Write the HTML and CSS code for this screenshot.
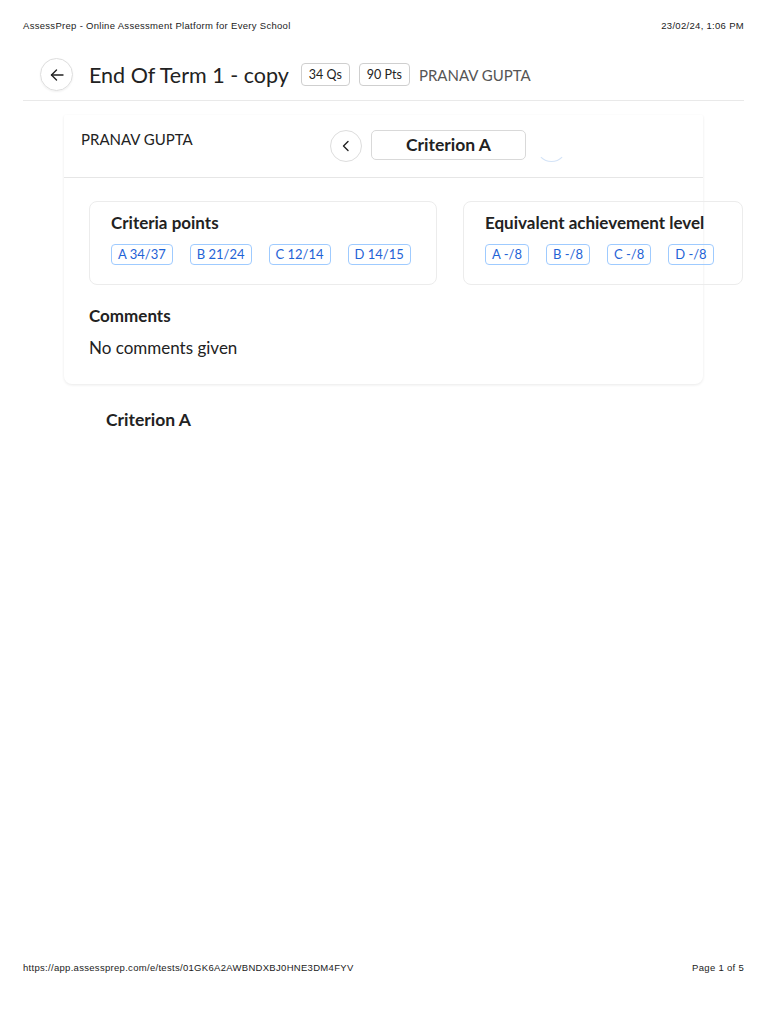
FILE: index.html
```html
<!DOCTYPE html>
<html lang="en">

<head>
    <meta charset="UTF-8">
    <meta name="viewport" content="width=device-width, initial-scale=1.0">
    <title>AssessPrep - Online Assessment Platform for Every School</title>
    <link rel="stylesheet" href="styles.css">
</head>

<body>
    <div class="sheet">
        <!-- print header -->
        <div class="print-bar">
            <span>AssessPrep - Online Assessment Platform for Every School</span>
            <span>23/02/24, 1:06 PM</span>
        </div>

        <!-- test title -->
        <div class="head">
            <a class="back" href="javascript:;">
                <svg width="16" height="16" viewBox="0 0 16 16" fill="none" stroke="#222" stroke-width="1.4"
                    stroke-linecap="round" stroke-linejoin="round">
                    <path d="M14 8H2.5"></path>
                    <path d="M7.5 3L2.5 8l5 5"></path>
                </svg>
            </a>
            <h1 class="title">End Of Term 1 - copy</h1>
            <span class="badge">34 Qs</span>
            <span class="badge">90 Pts</span>
            <span class="student">PRANAV GUPTA</span>
        </div>

        <div class="panel">
            <div class="panel-top">
                <div class="panel-name">PRANAV GUPTA</div>
                <a class="prev" href="javascript:;">
                    <svg width="12" height="12" viewBox="0 0 12 12" fill="none" stroke="#222" stroke-width="1.4"
                        stroke-linecap="round" stroke-linejoin="round">
                        <path d="M8 1.5L3.5 6 8 10.5"></path>
                    </svg>
                </a>
                <div class="crit-select">Criterion A</div>
                <i class="spin"></i>
            </div>

            <div class="cards">
                <div class="card card-points">
                    <h3>Criteria points</h3>
                    <ul class="tags">
                        <li>A 34/37</li>
                        <li>B 21/24</li>
                        <li>C 12/14</li>
                        <li>D 14/15</li>
                    </ul>
                </div>
                <div class="card card-level">
                    <h3>Equivalent achievement level</h3>
                    <ul class="tags tags-sm">
                        <li>A -/8</li>
                        <li>B -/8</li>
                        <li>C -/8</li>
                        <li>D -/8</li>
                    </ul>
                </div>
            </div>

            <div class="comments">
                <h3>Comments</h3>
                <p>No comments given</p>
            </div>
        </div>

        <h2 class="crit-title">Criterion A</h2>

        <!-- print footer -->
        <div class="print-bar print-foot">
            <span>https://app.assessprep.com/e/tests/01GK6A2AWBNDXBJ0HNE3DM4FYV</span>
            <span>Page 1 of 5</span>
        </div>
    </div>
</body>

</html>
```

FILE: styles.css
```css
html,
body,
h1,
h2,
h3,
p,
ul {
    margin: 0;
    padding: 0;
}

body {
    background: #fff;
    color: #222;
    font-family: Lato, "Open Sans", sans-serif;
}

.sheet {
    display: flex;
    flex-direction: column;
    min-height: 1024px;
}

.print-bar {
    display: flex;
    justify-content: space-between;
    padding: 20px 24px 0 23px;
    font-family: "Liberation Sans", Arial, sans-serif;
    font-size: 9.5px;
    letter-spacing: .3px;
    line-height: 11px;
    color: #222;
}

.print-foot {
    margin-top: auto;
    padding: 0 24px 51px 23px;
}

/* title row */
.head {
    display: flex;
    align-items: center;
    margin: 0 24px 0 23px;
    padding: 27px 0 9px 17px;
    border-bottom: 1px solid #e9e9e9;
}

.back {
    display: flex;
    align-items: center;
    justify-content: center;
    width: 31px;
    height: 31px;
    border: 1px solid #ddd;
    border-radius: 50%;
    box-shadow: 0 1px 2px rgba(0, 0, 0, .06);
}

.title {
    margin-left: 16px;
    font-size: 21.5px;
    font-weight: 400;
    line-height: 28px;
    color: #222;
}

.badge {
    margin-left: 12px;
    height: 21px;
    padding: 0 7px;
    border: 1px solid #cfcfcf;
    border-radius: 4px;
    font-size: 12.5px;
    line-height: 21px;
    color: #222;
}

.badge+.badge {
    margin-left: 9px;
}

.student {
    margin-left: 9px;
    font-size: 15px;
    color: #555;
}

/* main panel */
.panel {
    margin: 14px 65px 0 64px;
    padding-bottom: 25px;
    border-radius: 2px 2px 8px 8px;
    box-shadow: 0 1px 3px rgba(0, 0, 0, .09);
}

.panel-top {
    display: flex;
    align-items: flex-start;
    padding: 15px 0 15px 17px;
    border-bottom: 1px solid #e6e6e6;
}

.panel-name {
    flex: 0 0 249px;
    padding-top: 1px;
    font-size: 15px;
    line-height: 16px;
    color: #222;
}

.prev {
    display: flex;
    align-items: center;
    justify-content: center;
    width: 30px;
    height: 30px;
    border: 1px solid #ddd;
    border-radius: 50%;
}

.crit-select {
    margin-left: 9px;
    width: 153px;
    height: 28px;
    border: 1px solid #d9d9d9;
    border-radius: 5px;
    text-align: center;
    font-size: 17.5px;
    font-weight: 700;
    line-height: 28px;
    color: #222;
}

.spin {
    display: block;
    margin: 1px 0 0 10px;
    width: 29px;
    height: 29px;
    border: 1px solid transparent;
    border-bottom-color: #d3e3f7;
    border-radius: 50%;
}

.cards {
    display: flex;
    gap: 26px;
    padding: 23px 0 0 25px;
}

.card {
    flex-shrink: 0;
    box-sizing: border-box;
    height: 84px;
    padding: 10px 21px;
    border: 1px solid #ececec;
    border-radius: 8px;
}

.card-points {
    width: 348px;
}

.card-level {
    width: 280px;
}

.card h3 {
    font-size: 17px;
    font-weight: 700;
    line-height: 22px;
    color: #222;
}

.tags {
    display: flex;
    gap: 17px;
    margin-top: 10px;
    list-style: none;
}

.tags-sm {
    gap: 17px;
}

.tags li {
    flex-shrink: 0;
    white-space: nowrap;
    height: 19px;
    padding: 0 6px;
    border: 1px solid #9fcbff;
    border-radius: 4px;
    font-size: 13px;
    line-height: 19px;
    color: #1f63d6;
}

.comments {
    padding: 20px 0 0 25px;
}

.comments h3 {
    font-size: 17px;
    font-weight: 700;
    line-height: 22px;
}

.comments p {
    margin-top: 10px;
    font-size: 17px;
    line-height: 22px;
}

.crit-title {
    margin: 25px 0 0 106px;
    font-size: 17.5px;
    font-weight: 700;
    line-height: 22px;
}
```
